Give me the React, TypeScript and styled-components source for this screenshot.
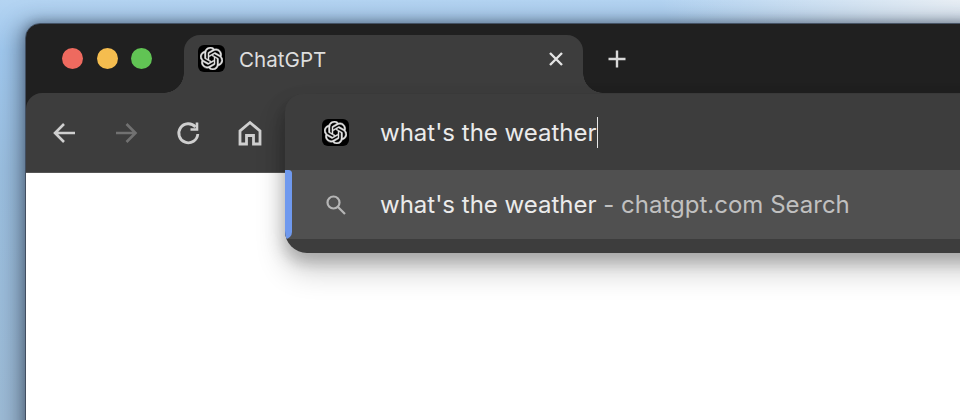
import React from "react";
import styled, { createGlobalStyle } from "styled-components";
import { SiOpenai } from "react-icons/si";

const Global = createGlobalStyle`
  html, body { margin: 0; padding: 0; }
  body { width: 960px; height: 420px; overflow: hidden; font-family: Inter, "Liberation Sans", sans-serif; }
`;

const Desktop = styled.div`
  width: 960px;
  height: 420px;
  box-sizing: border-box;
  padding: 24px 0 0 26px;
  overflow: hidden;
  background:
    radial-gradient(300px 90px at 960px 0px, rgba(235, 240, 245, 0.95), rgba(235, 240, 245, 0) 100%),
    linear-gradient(180deg, #b4d4f2 0%, #a0c8ee 12%, #9bbfe0 40%, #9dbbd6 100%);
`;

const Window = styled.div`
  position: relative;
  width: 960px;
  height: 420px;
  display: flex;
  flex-direction: column;
  border-radius: 14px 0 0 0;
  background: #202020;
  box-sizing: border-box;
  outline: 1px solid rgba(60, 72, 88, 0.85);
  box-shadow: -6px 0 22px rgba(30, 40, 55, 0.5), 0 -2px 10px rgba(30, 40, 55, 0.3);
`;

const TitleBar = styled.div`
  height: 69px;
  flex: none;
  display: flex;
  align-items: flex-start;
  background: #202020;
  border-radius: 14px 0 0 0;
  padding: 11px 0 0 36px;
  box-sizing: border-box;
`;

const Lights = styled.div`
  display: flex;
  gap: 13.5px;
  margin-top: 13px;
  width: 122px;
  flex: none;
`;

const Light = styled.span<{ $color: string }>`
  width: 21px;
  height: 21px;
  border-radius: 50%;
  background: ${(p) => p.$color};
`;

const Tab = styled.div`
  position: relative;
  width: 399px;
  height: 58px;
  flex: none;
  display: flex;
  align-items: flex-start;
  box-sizing: border-box;
  padding: 10px 14px 0 14px;
  background: #3d3d3d;
  border-radius: 16px 16px 0 0;
  &::before, &::after {
    content: "";
    position: absolute;
    bottom: 0;
    width: 20px;
    height: 20px;
  }
  &::before {
    left: -20px;
    background: radial-gradient(circle at 0 0, #202020 19.5px, #3d3d3d 20px);
  }
  &::after {
    right: -20px;
    background: radial-gradient(circle at 100% 0, #202020 19.5px, #3d3d3d 20px);
  }
`;

const Favicon = styled.span`
  width: 27px;
  height: 27px;
  flex: none;
  border-radius: 6px;
  background: #000;
  color: #e2e2e2;
  display: flex;
  align-items: center;
  justify-content: center;
`;

const TabTitle = styled.span`
  margin-left: 14px;
  flex: 1;
  font-size: 20.6px;
  line-height: 29px;
  color: #dedede;
`;

const CloseIcon = styled.svg`
  width: 16px;
  height: 16px;
  margin-top: 6px;
  margin-right: 5px;
`;

const PlusIcon = styled.svg`
  width: 20px;
  height: 20px;
  margin: 14px 0 0 24px;
  flex: none;
`;

const Toolbar = styled.div`
  position: relative;
  height: 80px;
  flex: none;
  display: flex;
  align-items: center;
  gap: 34px;
  padding-left: 25px;
  box-sizing: border-box;
  background: #3d3d3d;
  border-radius: 16px 0 0 0;
  border-bottom: 1px solid #555;
`;

const ToolIcon = styled.svg`
  width: 28px;
  height: 28px;
  flex: none;
`;

const Page = styled.div`
  flex: 1;
  background: #fff;
`;

const Omnibox = styled.div`
  position: absolute;
  left: 259px;
  top: 70px;
  width: 720px;
  height: 159px;
  display: flex;
  flex-direction: column;
  background: #3d3d3d;
  border-radius: 18px 0 0 22px;
  box-shadow: 0 10px 12px rgba(0, 0, 0, 0.09), 0 18px 30px rgba(0, 0, 0, 0.2), -4px 8px 18px rgba(0, 0, 0, 0.12);
  overflow: hidden;
`;

const InputRow = styled.div`
  height: 76px;
  flex: none;
  display: flex;
  align-items: center;
  padding: 0 0 0 37px;
  box-sizing: border-box;
`;

const Query = styled.span`
  margin-left: 31px;
  font-size: 24px;
  line-height: 30px;
  padding-top: 1px;
  color: #ebebeb;
  border-right: 1.5px solid #e8e8e8;
  white-space: nowrap;
`;

const SuggestRow = styled.div`
  position: relative;
  height: 69px;
  flex: none;
  display: flex;
  align-items: center;
  box-sizing: border-box;
  padding-left: 37px;
  background: #505050;
  &::before {
    content: "";
    position: absolute;
    left: 0;
    top: 0;
    bottom: 0;
    width: 7px;
    background: #6f99ee;
    border-radius: 0 4px 8px 0;
  }
`;

const SearchIcon = styled.svg`
  width: 27px;
  height: 27px;
  flex: none;
`;

const Suggest = styled.span`
  margin-left: 31px;
  font-size: 24px;
  line-height: 32px;
  padding-top: 1px;
  color: #ebebeb;
  white-space: nowrap;
`;

const Hint = styled.span`
  color: #c0c0c0;
`;

const Knot = () => <SiOpenai size={23} stroke="currentColor" strokeWidth={0.45} />;

export default function App() {
  return (
    <>
      <Global />
      <Desktop>
        <Window>
          <TitleBar>
            <Lights>
              <Light $color="#ee6a5f" />
              <Light $color="#f5bd4f" />
              <Light $color="#61c454" />
            </Lights>
            <Tab>
              <Favicon><Knot /></Favicon>
              <TabTitle>ChatGPT</TabTitle>
              <CloseIcon viewBox="0 0 16 16" fill="none" stroke="#e4e4e4" strokeWidth="2.4">
                <path d="M2 2 L14 14 M14 2 L2 14" />
              </CloseIcon>
            </Tab>
            <PlusIcon viewBox="0 0 20 20" fill="none" stroke="#d8d8d8" strokeWidth="2.4">
              <path d="M10 1.5 V18.5 M1.5 10 H18.5" />
            </PlusIcon>
          </TitleBar>
          <Toolbar>
            <ToolIcon viewBox="0 0 28 28" fill="none" stroke="#cfcfcf" strokeWidth="2.6">
              <path d="M24 14 H4 M13 5 L4 14 L13 23" />
            </ToolIcon>
            <ToolIcon viewBox="0 0 28 28" fill="none" stroke="#717171" strokeWidth="2.6">
              <path d="M3 14 H22 M13.5 5 L22.5 14 L13.5 23" />
            </ToolIcon>
            <ToolIcon viewBox="0 0 28 28" fill="none" stroke="#cfcfcf" strokeWidth="2.8">
              <path d="M20.5 8 A9.5 9.5 0 1 0 22.8 15" />
              <path d="M22 3.5 V10.5 H15.5" strokeWidth="2.6" />
            </ToolIcon>
            <ToolIcon viewBox="0 0 28 28" fill="none" stroke="#cfcfcf" strokeWidth="2.8">
              <path d="M13 3.5 L23 12 V25 H16.5 V16.5 H9.5 V25 H3 V12 Z" />
            </ToolIcon>
          </Toolbar>
          <Page />
          <Omnibox>
            <InputRow>
              <Favicon><Knot /></Favicon>
              <Query>what's the weather</Query>
            </InputRow>
            <SuggestRow>
              <SearchIcon viewBox="0 0 27 27" fill="none" stroke="#b5b5b5" strokeWidth="2.2">
                <circle cx="11.5" cy="11.5" r="6" />
                <path d="M16 16 L23 23" />
              </SearchIcon>
              <Suggest>what's the weather <Hint>- chatgpt.com Search</Hint></Suggest>
            </SuggestRow>
          </Omnibox>
        </Window>
      </Desktop>
    </>
  );
}
